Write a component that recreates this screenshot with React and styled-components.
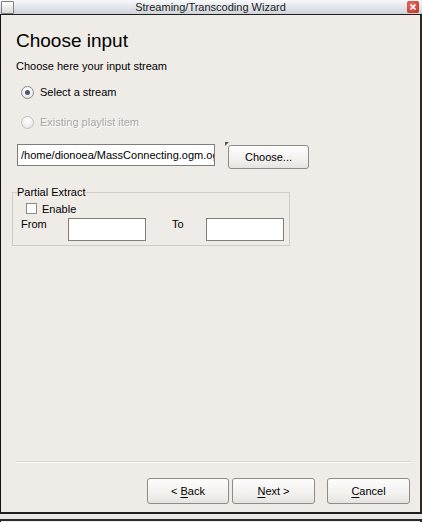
import React from "react";
import styled, { createGlobalStyle } from "styled-components";

const GlobalStyle = createGlobalStyle`
    html, body {
        margin: 0;
        padding: 0;
        background: #efebe7;
    }
    body {
        font-family: "Liberation Sans", Arial, sans-serif;
        font-size: 11px;
        color: #000;
    }
`;

const Window = styled.div`
    width: 422px;
    height: 522px;
    display: flex;
    flex-direction: column;
    background: #efebe7;
    box-sizing: border-box;
    overflow: hidden;
`;

const TitleBar = styled.div`
    height: 14px;
    flex: none;
    display: flex;
    align-items: center;
    justify-content: space-between;
    padding: 0 3px 0 1px;
    background: linear-gradient(#f7f8fa, #dfe3e8 60%, #cdd3da);
    border-bottom: 1px solid #1e1e1e;
`;

const TitleText = styled.span`
    flex: 1;
    text-align: center;
    font-size: 11px;
    color: #1a1a1a;
    line-height: 14px;
`;

const WinIcon = styled.div`
    width: 11px;
    height: 11px;
    border: 1px solid #7d7d7d;
    background: linear-gradient(#ffffff, #d9d9d9);
    border-radius: 1px;
`;

const CloseBtn = styled.div`
    width: 12px;
    height: 12px;
    border-radius: 2px;
    background: radial-gradient(circle at 40% 35%, #e97a6a, #b9271c);
    display: flex;
    align-items: center;
    justify-content: center;
`;

const Body = styled.div`
    flex: 1;
    display: flex;
    flex-direction: column;
    border-left: 1px solid #111;
    border-right: 2px solid #2a2a2a;
    padding: 15px 0 0 15px;
`;

const Heading = styled.h1`
    margin: 0;
    font-weight: normal;
    font-size: 19px;
    line-height: 22px;
`;

const Subtitle = styled.div`
    margin-top: 7px;
    line-height: 14px;
`;

const RadioRow = styled.label`
    display: flex;
    align-items: center;
    gap: 6px;
    margin-left: 5px;
    margin-top: ${(p) => p.$gap}px;
    height: 14px;
    color: ${(p) => (p.$disabled ? "#a9a6a2" : "#000")};
    text-shadow: ${(p) => (p.$disabled ? "1px 1px 0 #ffffff" : "none")};
`;

const RadioCircle = styled.span`
    width: 11px;
    height: 11px;
    border-radius: 50%;
    border: 1px solid ${(p) => (p.$disabled ? "#c4c0bb" : "#8a8a8a")};
    background: radial-gradient(circle at 50% 30%, #ffffff, #e4e2df);
    display: flex;
    align-items: center;
    justify-content: center;
    &::after {
        content: "";
        width: 5px;
        height: 5px;
        border-radius: 50%;
        background: ${(p) => (p.$checked ? "#4b5671" : "transparent")};
    }
`;

const FileRow = styled.div`
    display: flex;
    align-items: flex-start;
    margin-top: 15px;
    margin-left: 1px;
`;

const TextField = styled.div`
    width: ${(p) => p.$w}px;
    height: ${(p) => p.$h}px;
    box-sizing: border-box;
    border: 1px solid #7f7d7a;
    background: #fff;
    padding: 0 3px;
    line-height: ${(p) => p.$h - 2}px;
    white-space: nowrap;
    overflow: hidden;
`;

const ChooseWrap = styled.div`
    position: relative;
    margin-left: 13px;
    margin-top: 1px;
`;

const Corner = styled.span`
    position: absolute;
    left: -3px;
    top: -3px;
    width: 0;
    height: 0;
    border-top: 4px solid #555;
    border-right: 4px solid transparent;
`;

const Button = styled.div`
    width: ${(p) => p.$w}px;
    height: ${(p) => p.$h}px;
    box-sizing: border-box;
    border: 1px solid #8f8c88;
    border-radius: 3px;
    background: linear-gradient(#fdfdfc, #f3f1ee 60%, #e6e3df);
    display: flex;
    align-items: center;
    justify-content: center;
    font-size: 11px;
    u {
        text-decoration: underline;
        text-underline-offset: 2px;
    }
`;

const Group = styled.fieldset`
    width: 278px;
    box-sizing: border-box;
    margin: 17px 0 0 -4px;
    padding: 0 0 4px 8px;
    border: 1px solid #cfcbc6;
    border-radius: 0;
    min-width: 0;
`;

const Legend = styled.legend`
    padding: 0;
    margin-left: -4px;
    font-size: 11px;
    line-height: 13px;
`;

const CheckRow = styled.label`
    display: flex;
    align-items: center;
    gap: 5px;
    margin-left: 5px;
    margin-top: 3px;
    height: 13px;
`;

const CheckBox = styled.span`
    width: 9px;
    height: 9px;
    border: 1px solid #8a8a8a;
    background: #fff;
`;

const RangeRow = styled.div`
    display: flex;
    align-items: flex-start;
    margin-top: 3px;
`;

const RangeLabel = styled.span`
    width: ${(p) => p.$w}px;
    margin-left: ${(p) => p.$offset || 0}px;
    line-height: 13px;
`;

const Footer = styled.div`
    margin-top: auto;
    display: flex;
    flex-direction: column;
`;

const Separator = styled.div`
    width: 395px;
    height: 0;
    border-top: 1px solid #dcd8d3;
    border-bottom: 1px solid #fbfaf9;
`;

const ButtonRow = styled.div`
    display: flex;
    align-items: center;
    margin-top: 15px;
    margin-left: 131px;
    gap: 3px;
    height: 26px;
`;

const Spacer = styled.div`
    width: 6px;
`;

const BottomEdge = styled.div`
    margin-top: 8px;
    margin-bottom: 1px;
    margin-left: -16px;
    margin-right: -2px;
    height: 5px;
    border-top: 2px solid #1e1e1e;
    border-bottom: 2px solid #2a2a2a;
    background: #e9e7e4;
`;

export default function App() {
    return (
        <Window>
            <GlobalStyle />
            <TitleBar>
                <WinIcon />
                <TitleText>Streaming/Transcoding Wizard</TitleText>
                <CloseBtn>
                    <svg width="8" height="8" viewBox="0 0 8 8">
                        <path d="M1.5 1.5 L6.5 6.5 M6.5 1.5 L1.5 6.5" stroke="#fff" strokeWidth="1.6" />
                    </svg>
                </CloseBtn>
            </TitleBar>
            <Body>
                <Heading>Choose input</Heading>
                <Subtitle>Choose here your input stream</Subtitle>
                <RadioRow $gap={12}>
                    <RadioCircle $checked />
                    Select a stream
                </RadioRow>
                <RadioRow $gap={16} $disabled>
                    <RadioCircle $disabled />
                    Existing playlist item
                </RadioRow>
                <FileRow>
                    <TextField $w={198} $h={22}>/home/dionoea/MassConnecting.ogm.ogg</TextField>
                    <ChooseWrap>
                        <Corner />
                        <Button $w={81} $h={24}>Choose...</Button>
                    </ChooseWrap>
                </FileRow>
                <Group>
                    <Legend>Partial Extract</Legend>
                    <CheckRow>
                        <CheckBox />
                        Enable
                    </CheckRow>
                    <RangeRow>
                        <RangeLabel $w={47}>From</RangeLabel>
                        <TextField $w={78} $h={23} />
                        <RangeLabel $w={34} $offset={26}>To</RangeLabel>
                        <TextField $w={78} $h={23} />
                    </RangeRow>
                </Group>
                <Footer>
                    <Separator />
                    <ButtonRow>
                        <Button $w={82} $h={26}>&lt;&nbsp;<u>B</u>ack</Button>
                        <Button $w={83} $h={26}><u>N</u>ext &gt;</Button>
                        <Spacer />
                        <Button $w={83} $h={26}><u>C</u>ancel</Button>
                    </ButtonRow>
                    <BottomEdge />
                </Footer>
            </Body>
        </Window>
    );
}
